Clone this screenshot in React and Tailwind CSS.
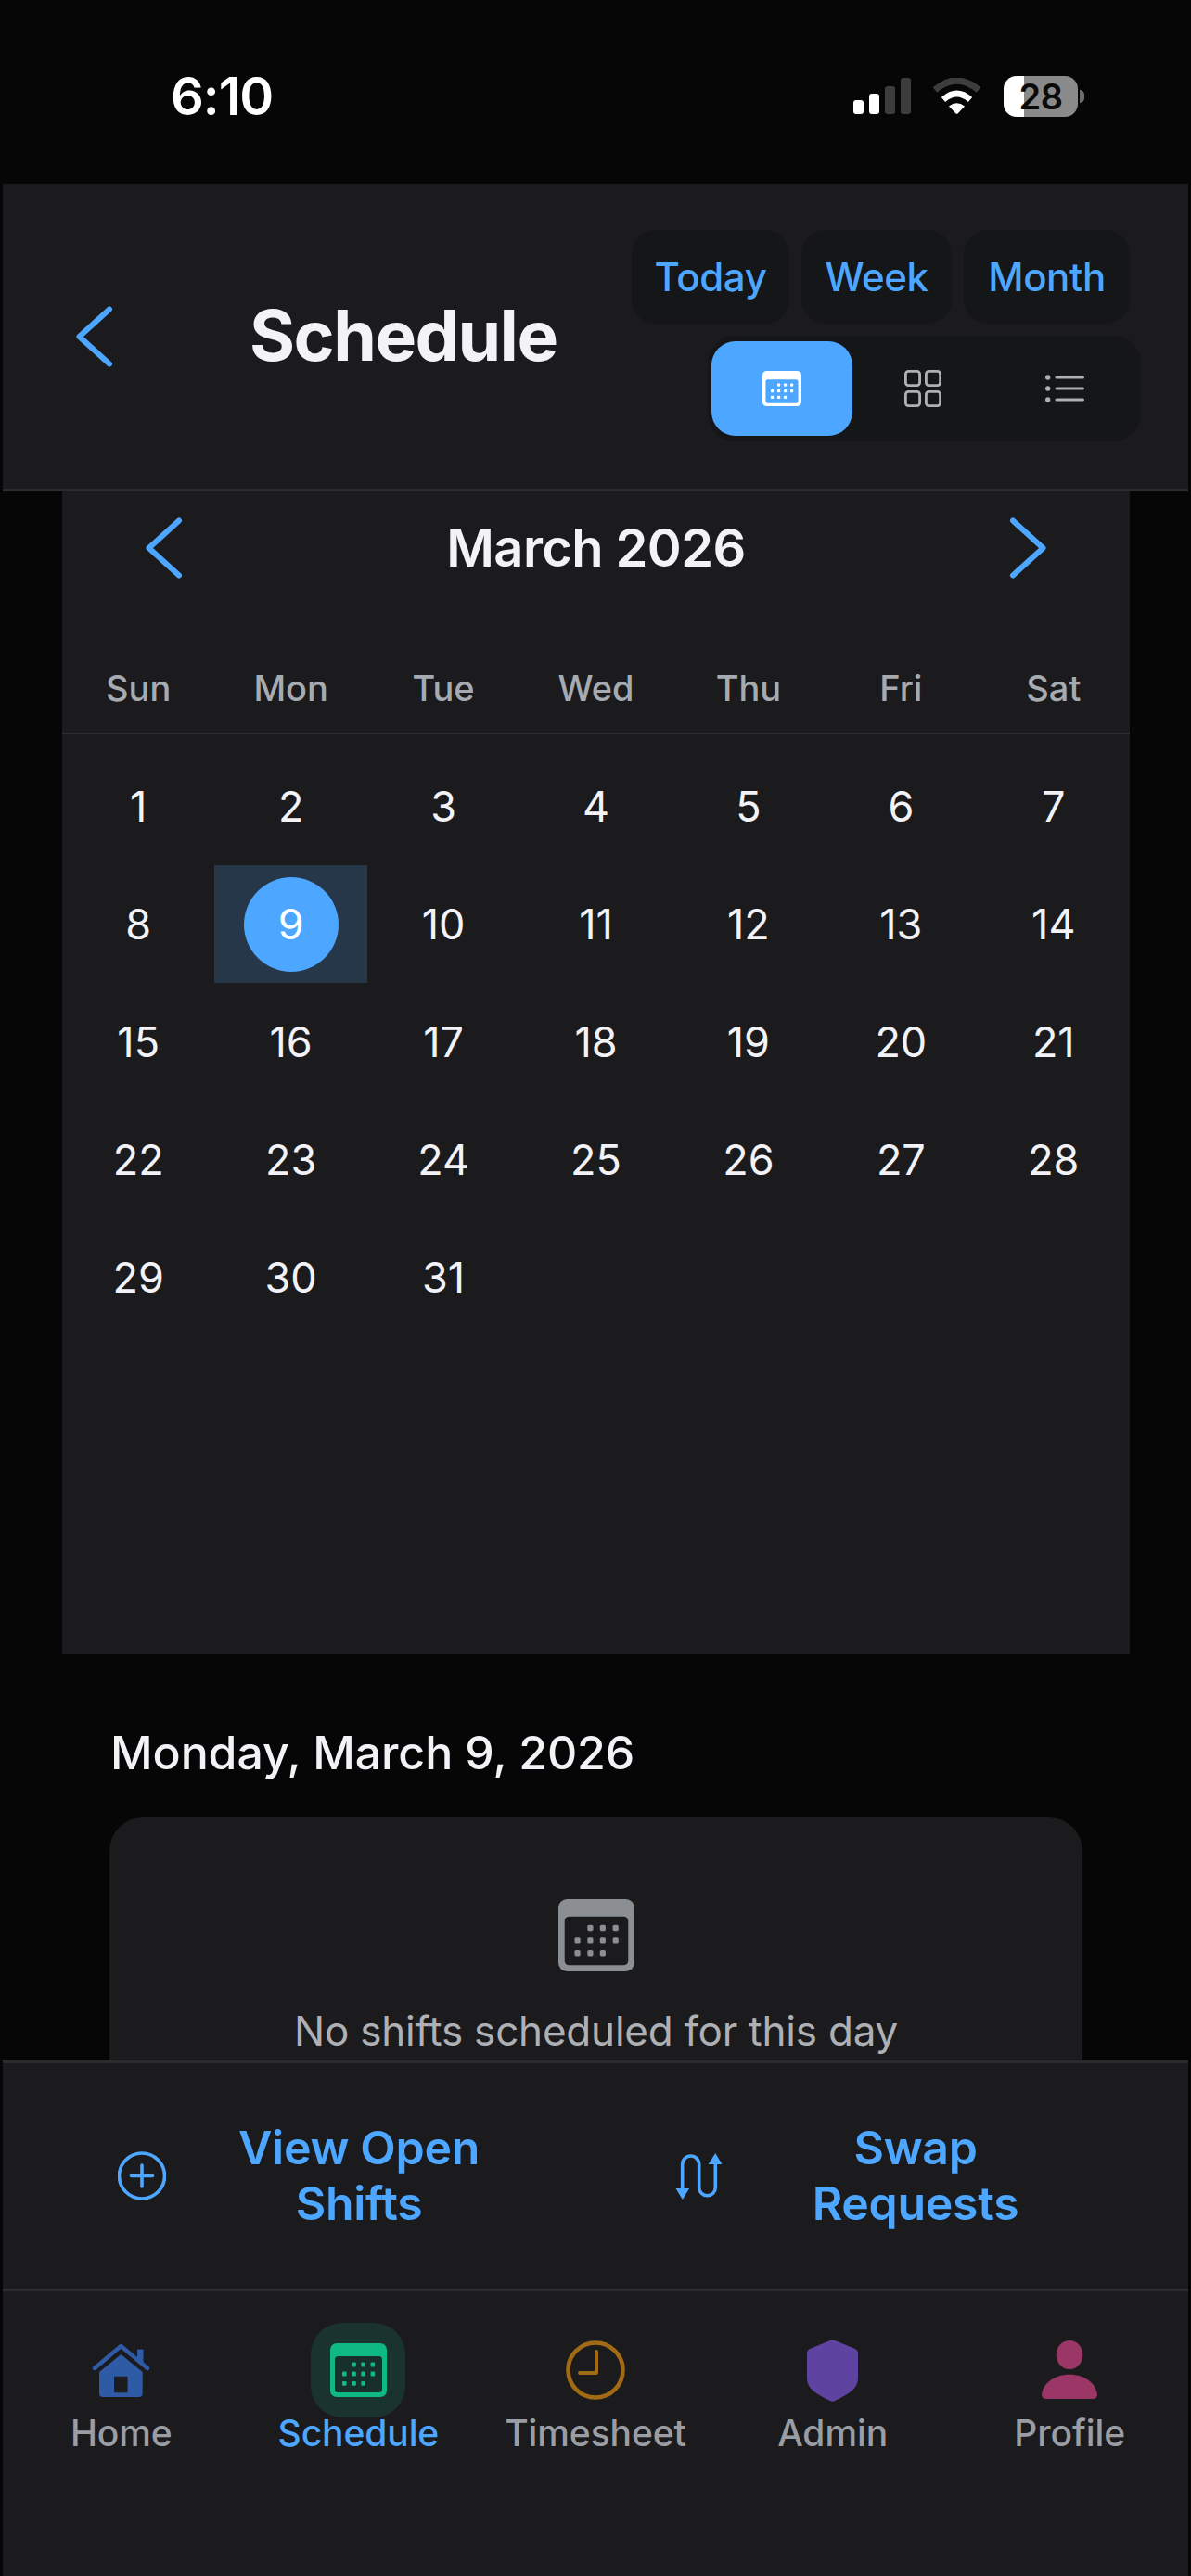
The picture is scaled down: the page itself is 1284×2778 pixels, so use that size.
import React from "react";

function Cal({ w, h, fg, bg }) {
  const dots = [
    [25.6, 23], [35.6, 23], [45.9, 23],
    [15.3, 33], [25.6, 33], [35.6, 33], [45.9, 33],
    [15.3, 43.3], [25.6, 43.3], [35.6, 43.3],
  ];
  return (
    <svg width={w} height={h} viewBox="0 0 61 58" preserveAspectRatio="none">
      <rect x="0" y="0" width="61" height="58" rx="7" fill={fg} />
      <rect x="5" y="14" width="51" height="39" rx="3.5" fill={bg} />
      {dots.map(([x, y], i) => (
        <rect key={i} x={x - 2.3} y={y - 2.4} width="4.6" height="4.8" rx="1.2" fill={fg} />
      ))}
    </svg>
  );
}

function Chevron({ dir, className }) {
  return (
    <svg width="40" height="66" viewBox="0 0 40 66" className={className} fill="none" stroke="#4da6ff" strokeWidth="6" strokeLinecap="round" strokeLinejoin="round">
      {dir === "left" ? <path d="M36 3.5 L3.5 33 L36 62.5" /> : <path d="M4 3.5 L36.5 33 L4 62.5" />}
    </svg>
  );
}

function Wifi() {
  return (
    <svg width="53" height="39" viewBox="0 0 53 39">
      <path d="M3 13 Q26.5 -7 50 13" fill="none" stroke="#3d3d3d" strokeWidth="7" />
      <path d="M12 23.5 Q26.5 10.5 41 23.5" fill="none" stroke="#fff" strokeWidth="6.5" />
      <path d="M18 30.5 Q26.5 24 35 30.5 L27.5 38.5 Q26.5 39.2 25.5 38.5 Z" fill="#fff" />
    </svg>
  );
}

function Signal() {
  return (
    <div className="flex items-end gap-[6px] h-[39px]">
      <div className="w-[11px] h-[15px] rounded-[3px] bg-white" />
      <div className="w-[11px] h-[22px] rounded-[3px] bg-white" />
      <div className="w-[11px] h-[30px] rounded-[3px] bg-[#3d3d3d]" />
      <div className="w-[11px] h-[39px] rounded-[3px] bg-[#3d3d3d]" />
    </div>
  );
}

function HomeIcon() {
  return (
    <svg width="63" height="58" viewBox="0 0 63 58">
      <path d="M49 7 Q49 6.5 50 6.5 H54.5 Q55.5 6.5 55.5 7.5 V22 L49 17 Z" fill="#2f5aa6" />
      <path d="M31.4 12 L54.7 31 V54 Q54.7 58 50.7 58 H12 Q8 58 8 54 V31 Z" fill="#2f5aa6" />
      <rect x="24" y="35.7" width="14.6" height="17.5" rx="1" fill="#1c1c1e" />
      <path d="M3 27 L31.4 3 L60 27" fill="none" stroke="#2f5aa6" strokeWidth="4.4" strokeLinecap="round" strokeLinejoin="round" />
    </svg>
  );
}

function ClockIcon() {
  return (
    <svg width="64" height="64" viewBox="0 0 64 64" fill="none" stroke="#a16a14" strokeLinecap="round" strokeLinejoin="round">
      <circle cx="32" cy="32" r="29.5" strokeWidth="4.6" />
      <path d="M33 12 V35 H15" strokeWidth="4" />
    </svg>
  );
}

function ShieldIcon() {
  return (
    <svg width="55" height="67" viewBox="0 0 55 67">
      <path d="M27.5 0.5 Q28.5 0.5 30 1 L52 10 Q55 11.5 55 15 V42 C55 52 47 58 29 66.5 Q27.5 67 26 66.5 C8 58 0 52 0 42 V15 Q0 11.5 3 10 L25 1 Q26 0.5 27.5 0.5 Z" fill="#5e43a0" />
    </svg>
  );
}

function ProfileIcon() {
  return (
    <svg width="60" height="64" viewBox="0 0 60 64" fill="#9b3766">
      <ellipse cx="30" cy="15.5" rx="14.3" ry="15.5" />
      <path d="M0 58 C2 45 15 36.7 30 36.7 C45 36.7 58 45 60 58 Q60 63 55 63 H5 Q0 63 0 58 Z" />
    </svg>
  );
}

function PlusIcon() {
  return (
    <svg width="52" height="53" viewBox="0 0 52 53" fill="none" stroke="#4da6ff" strokeLinecap="round">
      <circle cx="26" cy="26.5" r="24.5" strokeWidth="3.6" />
      <path d="M14.5 26.5 H37.5 M26 15 V38" strokeWidth="3.6" />
    </svg>
  );
}

function SwapIcon() {
  return (
    <svg width="51" height="50" viewBox="0 0 51 50" fill="none">
      <path d="M7.7 40 V12 a9 9 0 0 1 18 0 V37 a8.8 8.8 0 0 0 17.6 0 V10" stroke="#4da6ff" strokeWidth="3.6" />
      <path d="M0.5 38 H15.2 L7.85 50 Z M35.6 12 H50.4 L43.3 0 Z" fill="#4da6ff" />
    </svg>
  );
}

function GridIcon() {
  return (
    <svg width="40" height="40" viewBox="0 0 40 40" fill="none" stroke="#aeb0b4" strokeWidth="2.8">
      <rect x="1.4" y="1.4" width="15.2" height="15.2" rx="3" />
      <rect x="23.4" y="1.4" width="15.2" height="15.2" rx="3" />
      <rect x="1.4" y="23.4" width="15.2" height="15.2" rx="3" />
      <rect x="23.4" y="23.4" width="15.2" height="15.2" rx="3" />
    </svg>
  );
}

function ListIcon() {
  return (
    <svg width="42" height="30" viewBox="0 0 42 30" fill="#aeb0b4">
      <circle cx="2.7" cy="3" r="2.7" />
      <circle cx="2.7" cy="15" r="2.7" />
      <circle cx="2.7" cy="27" r="2.7" />
      <rect x="10.5" y="1.4" width="31.5" height="3.2" rx="1.6" />
      <rect x="10.5" y="13.4" width="31.5" height="3.2" rx="1.6" />
      <rect x="10.5" y="25.4" width="31.5" height="3.2" rx="1.6" />
    </svg>
  );
}

const WEEK = ["Sun", "Mon", "Tue", "Wed", "Thu", "Fri", "Sat"];
const DAYS = Array.from({ length: 31 }, (_, i) => i + 1);

function NavItem({ icon, label, active, box }) {
  return (
    <div className="flex-1 flex flex-col items-center">
      <div className={`w-[102px] h-[102px] rounded-[34px] flex items-center justify-center ${box ? "bg-[#1a332d]" : ""}`}>
        {icon}
      </div>
      <div className={`mt-[-3px] h-[40px] leading-[40px] text-[39px] font-medium whitespace-nowrap tracking-[-0.1px] ${active ? "text-[#4da6ff]" : "text-[#9a9da3]"}`}>
        {label}
      </div>
    </div>
  );
}

export default function App() {
  return (
    <div className="w-[1284px] h-[2778px] bg-[#060606] px-[3px] flex flex-col overflow-hidden font-['Inter',sans-serif]">
      {/* status bar */}
      <div className="h-[198px] shrink-0 flex items-start pt-[82px] pl-[181px] pr-[112px] justify-between">
        <div className="text-[56px] leading-[44px] font-semibold text-white tracking-[-1px]">6:10</div>
        <div className="flex items-start">
          <div className="mt-[2px]"><Signal /></div>
          <div className="ml-[23px] mt-[2px]"><Wifi /></div>
          <div className="ml-[24px] w-[80px] h-[44px] rounded-[14px] bg-[linear-gradient(90deg,#fff_27.5%,#8a8a8a_27.5%)] flex items-center justify-center text-[38px] font-semibold text-[#0a0a0a] tracking-[-0.5px]">
            28
          </div>
          <div className="ml-[2px] mt-[15px] w-[5px] h-[14px] rounded-r-[5px] bg-[#6e6e6e]" />
        </div>
      </div>

      {/* header */}
      <div className="h-[332px] shrink-0 bg-[#1b1b1d] border-b-[3px] border-[#2c2c2e] flex items-start">
        <div className="ml-[79px] mt-[132px]"><Chevron dir="left" /></div>
        <div className="ml-[147px] mt-[124px] text-[75px] leading-[80px] font-bold text-[#f2f2f7] tracking-[-1.5px] whitespace-nowrap">Schedule</div>
        <div className="ml-auto mr-[51px] mt-[50px] flex flex-col items-end gap-[13px]">
          <div className="flex gap-[13px] mr-[12px]">
            {[["Today", "w-[170px]"], ["Week", "w-[162px]"], ["Month", "w-[179px]"]].map(([t, w]) => (
              <div key={t} className={`${w} h-[101px] rounded-[26px] bg-[#151618] flex items-center justify-center text-[42px] font-medium text-[#4da6ff] tracking-[-0.4px]`}>{t}</div>
            ))}
          </div>
          <div className="w-[467px] h-[114px] rounded-[30px] bg-[#151618] p-[6px] pl-[4px] flex">
            <div className="w-[152px] h-[102px] rounded-[26px] bg-[#4da6ff] flex items-center justify-center">
              <Cal w={42} h={38} fg="#ffffff" bg="#4da6ff" />
            </div>
            <div className="w-[153px] h-[102px] flex items-center justify-center"><GridIcon /></div>
            <div className="w-[153px] h-[102px] flex items-center justify-center"><ListIcon /></div>
          </div>
        </div>
      </div>

      {/* scrolling content */}
      <div className="flex-1 min-h-0 overflow-hidden">
        <div className="ml-[64px] w-[1151px] h-[1254px] bg-[#1b1b1d]">
          <div className="h-[122px] flex items-center justify-between px-[90px]">
            <Chevron dir="left" />
            <div className="text-[56px] font-semibold text-[#f2f2f7] tracking-[-0.6px] leading-[70px]">March 2026</div>
            <Chevron dir="right" />
          </div>
          <div className="mt-[42px] h-[98px] border-b-[2px] border-[#2c2c2e] grid grid-cols-7 items-center">
            {WEEK.map((d) => (
              <div key={d} className="text-center text-[38px] font-medium text-[#a6abb1]">{d}</div>
            ))}
          </div>
          <div className="grid grid-cols-7 pt-[14px] auto-rows-[127px]">
            {DAYS.map((d) => (
              <div key={d} className={`flex items-center justify-center ${d === 9 ? "bg-[#263749]" : ""}`}>
                <div className={`w-[102px] h-[102px] rounded-full flex items-center justify-center text-[45px] text-[#f2f2f7] ${d === 9 ? "bg-[#4da6ff] !text-white" : ""}`}>
                  {d}
                </div>
              </div>
            ))}
          </div>
        </div>

        <div className="mt-[76px] ml-[116px] h-[60px] leading-[60px] text-[50px] font-medium text-[#f2f2f7] tracking-[-0.1px] whitespace-nowrap">Monday, March 9, 2026</div>
        <div className="mt-[40px] ml-[115px] w-[1049px] h-[400px] rounded-[36px] bg-[#1b1b1d] pt-[88px] flex flex-col items-center">
          <Cal w={82} h={78} fg="#8b8f93" bg="#1b1b1d" />
          <div className="mt-[34px] h-[60px] leading-[60px] text-[44px] text-[#aeb0b4] tracking-[-0.2px] whitespace-nowrap">No shifts scheduled for this day</div>
        </div>
      </div>

      {/* actions */}
      <div className="h-[246px] shrink-0 bg-[#1b1b1d] border-t-[3px] border-[#2c2c2e] flex items-center pl-[124px]">
        <PlusIcon />
        <div className="ml-[58px] w-[300px] text-center text-[50px] leading-[60px] font-semibold text-[#4da6ff] tracking-[-0.3px] mt-[-2px]">View Open<br />Shifts</div>
        <div className="ml-[191px]"><SwapIcon /></div>
        <div className="ml-[58px] w-[300px] text-center text-[50px] leading-[60px] font-semibold text-[#4da6ff] tracking-[-0.3px] mt-[-2px]">Swap<br />Requests</div>
      </div>

      {/* tab bar */}
      <div className="h-[310px] shrink-0 bg-[#1b1b1d] border-t-[3px] border-[#2c2c2e] pt-[34px] flex">
        <NavItem icon={<HomeIcon />} label="Home" />
        <NavItem icon={<Cal w={61} h={58} fg="#10b981" bg="#17302a" />} label="Schedule" active box />
        <NavItem icon={<ClockIcon />} label="Timesheet" />
        <NavItem icon={<ShieldIcon />} label="Admin" />
        <NavItem icon={<ProfileIcon />} label="Profile" />
      </div>
    </div>
  );
}
